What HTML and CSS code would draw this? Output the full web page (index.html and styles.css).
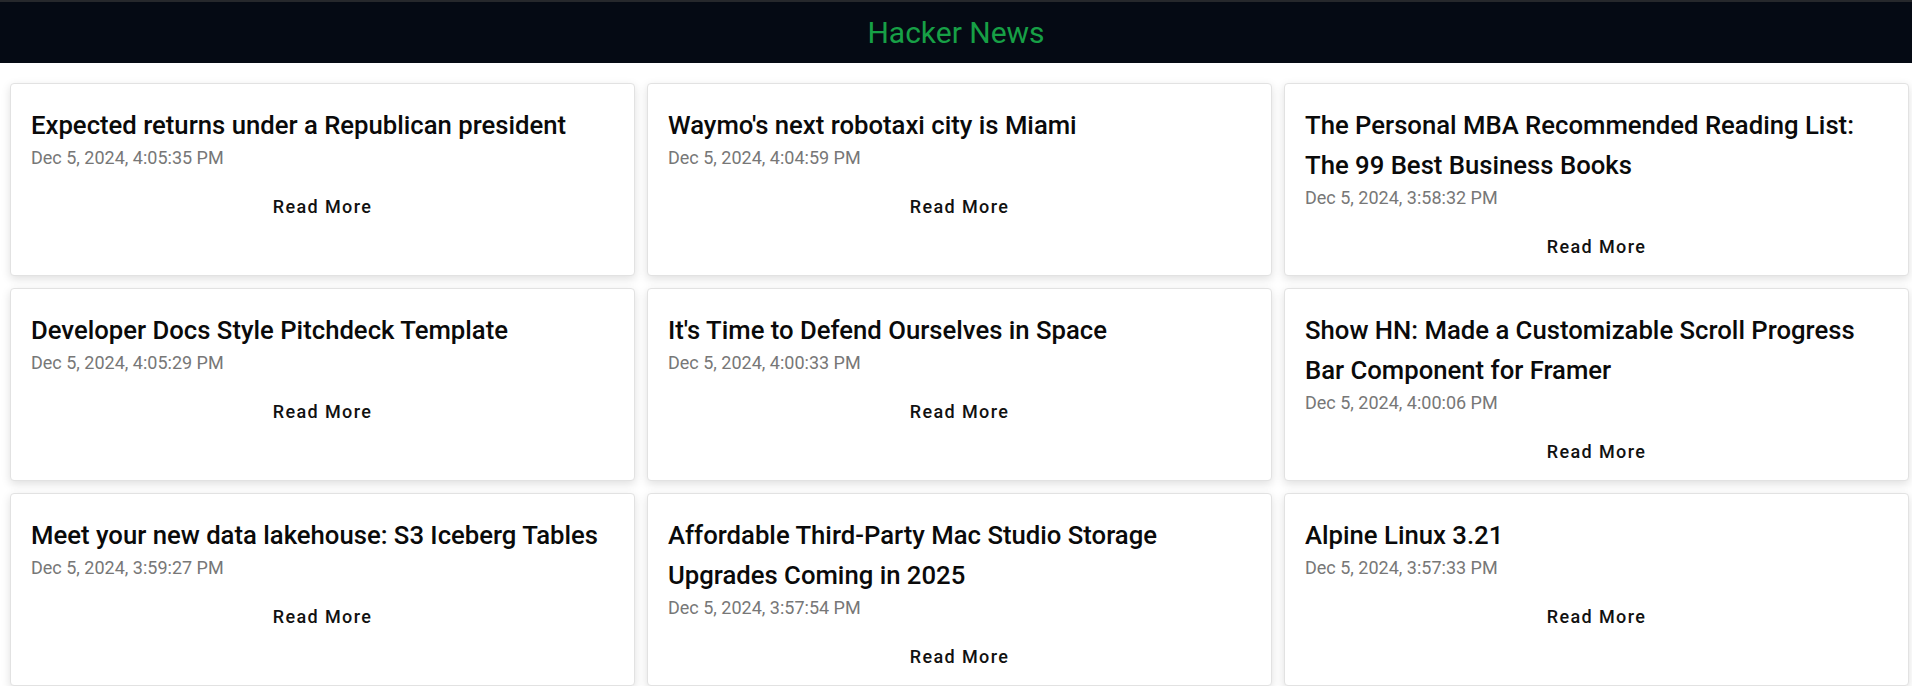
FILE: index.html
```html
<!DOCTYPE html>
<html lang="en">
<head>
<meta charset="utf-8">
<title>Hacker News</title>
<link rel="stylesheet" href="styles.css">
</head>
<body>
<header class="topbar">
  <h1 class="brand">Hacker News</h1>
</header>
<main class="grid">
  <article class="card">
    <h2 class="title">Expected returns under a Republican president</h2>
    <p class="date">Dec 5, 2024, 4:05:35 PM</p>
    <button class="more">Read More</button>
  </article>
  <article class="card">
    <h2 class="title">Waymo's next robotaxi city is Miami</h2>
    <p class="date">Dec 5, 2024, 4:04:59 PM</p>
    <button class="more">Read More</button>
  </article>
  <article class="card">
    <h2 class="title">The Personal MBA Recommended Reading List: The 99 Best Business Books</h2>
    <p class="date">Dec 5, 2024, 3:58:32 PM</p>
    <button class="more">Read More</button>
  </article>
  <article class="card">
    <h2 class="title">Developer Docs Style Pitchdeck Template</h2>
    <p class="date">Dec 5, 2024, 4:05:29 PM</p>
    <button class="more">Read More</button>
  </article>
  <article class="card">
    <h2 class="title">It's Time to Defend Ourselves in Space</h2>
    <p class="date">Dec 5, 2024, 4:00:33 PM</p>
    <button class="more">Read More</button>
  </article>
  <article class="card">
    <h2 class="title">Show HN: Made a Customizable Scroll Progress Bar Component for Framer</h2>
    <p class="date">Dec 5, 2024, 4:00:06 PM</p>
    <button class="more">Read More</button>
  </article>
  <article class="card">
    <h2 class="title">Meet your new data lakehouse: S3 Iceberg Tables</h2>
    <p class="date">Dec 5, 2024, 3:59:27 PM</p>
    <button class="more">Read More</button>
  </article>
  <article class="card">
    <h2 class="title">Affordable Third-Party Mac Studio Storage Upgrades Coming in 2025</h2>
    <p class="date">Dec 5, 2024, 3:57:54 PM</p>
    <button class="more">Read More</button>
  </article>
  <article class="card">
    <h2 class="title">Alpine Linux 3.21</h2>
    <p class="date">Dec 5, 2024, 3:57:33 PM</p>
    <button class="more">Read More</button>
  </article>
</main>
</body>
</html>
```
FILE: styles.css
```css
* { box-sizing: border-box; }
html, body {
  margin: 0;
  padding: 0;
  background: #ffffff;
  font-family: Roboto, "Liberation Sans", Arial, sans-serif;
}
.topbar {
  height: 63px;
  background: #050a14;
  border-top: 2px solid #26282c;
  display: flex;
  align-items: center;
  justify-content: center;
}
.brand {
  margin: 0;
  font-size: 30px;
  font-weight: 400;
  color: #17a046;
  line-height: 1;
}
.grid {
  display: grid;
  grid-template-columns: repeat(3, 625px);
  grid-auto-rows: 193px;
  column-gap: 12px;
  row-gap: 12px;
  padding: 20px 3px 0 10px;
}
.card {
  background: #fff;
  border: 1px solid #e2e2e2;
  border-radius: 4px;
  box-shadow: 0 3px 10px rgba(0, 0, 0, 0.13);
  padding: 21px 20px 11px;
  display: flex;
  flex-direction: column;
}
.title {
  margin: 0;
  font-size: 25.7px;
  font-weight: 500;
  line-height: 40px;
  color: #0a0a0a;
}
.date {
  margin: 0;
  font-size: 18px;
  line-height: 26px;
  color: #777;
}
.more {
  margin-top: 17px;
  height: 36px;
  border: none;
  background: transparent;
  font-family: inherit;
  font-size: 18px;
  font-weight: 500;
  letter-spacing: 1.4px;
  color: #111;
  cursor: pointer;
  padding: 0;
}
```
